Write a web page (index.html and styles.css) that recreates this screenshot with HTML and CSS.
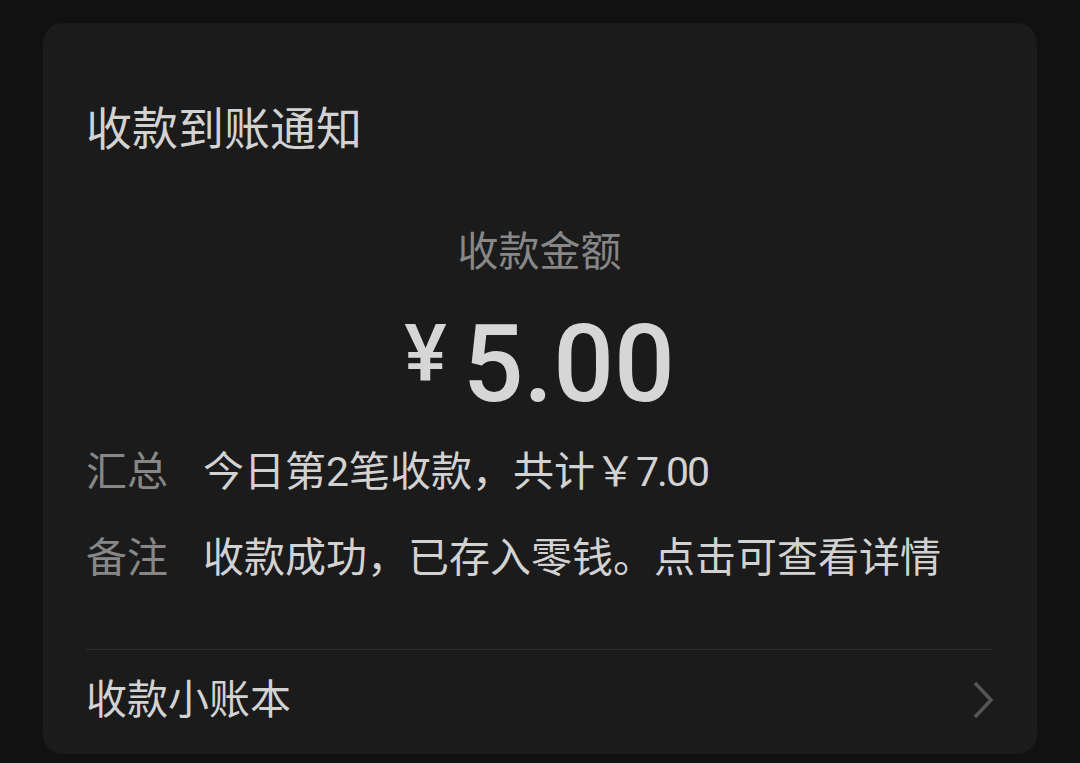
FILE: index.html
```html
<!DOCTYPE html>
<html lang="zh-CN">
<head>
    <meta charset="UTF-8">
    <meta name="viewport" content="width=device-width, initial-scale=1.0">
    <title>收款到账通知</title>
    <link rel="stylesheet" href="styles.css">
</head>
<body>
    <div class="card">
        <h1 class="title">收款到账通知</h1>
        <div class="amount-label">收款金额</div>
        <div class="amount"><span class="yen">¥</span>5.00</div>
        <div class="row">
            <span class="row-label">汇总</span>
            <span class="row-value">今日第2笔收款，共计￥<span class="num">7.00</span></span>
        </div>
        <div class="row">
            <span class="row-label">备注</span>
            <span class="row-value">收款成功，已存入零钱。点击可查看详情</span>
        </div>
        <div class="footer">
            <span>收款小账本</span>
            <svg class="chevron" width="22" height="38" viewBox="0 0 22 38">
                <path d="M3 2 L19 19 L3 36" fill="none" stroke="#555" stroke-width="3.5"/>
            </svg>
        </div>
    </div>
</body>
</html>
```

FILE: styles.css
```css
body {
    margin: 0;
    background: #111;
    font-family: Roboto, "Noto Sans CJK SC", sans-serif;
    color: #d2d2d2;
}
.card {
    margin: 23px 0 0 43px;
    width: 994px;
    height: 731px;
    box-sizing: border-box;
    padding: 76px 44px 0 43px;
    background: #1b1b1b;
    border-radius: 20px;
}
.title {
    margin: 0;
    font-size: 46px;
    font-weight: normal;
    line-height: 60px;
}
.amount-label {
    margin-top: 68px;
    text-align: center;
    font-size: 41px;
    line-height: 50px;
    color: #878787;
}
.amount {
    margin-top: 28px;
    height: 120px;
    text-align: center;
    font-size: 107px;
    font-weight: 500;
    line-height: 120px;
    color: #d6d6d6;
}
.yen {
    font-size: 80px;
    line-height: 0;
    vertical-align: 20px;
    margin-right: 16px;
}
.row {
    display: flex;
    font-size: 41px;
    line-height: 56px;
    margin-top: 19px;
}
.row + .row {
    margin-top: 30px;
}
.row-label {
    width: 82px;
    margin-right: 35px;
    color: #878787;
}
.row-value {
    color: #d2d2d2;
}
.num {
    letter-spacing: -2px;
}
.footer {
    margin-top: 63px;
    border-top: 1px solid #303030;
    padding-top: 22px;
    display: flex;
    justify-content: space-between;
    align-items: center;
    font-size: 41px;
    line-height: 56px;
}
.chevron {
    margin-right: -1px;
}
```
